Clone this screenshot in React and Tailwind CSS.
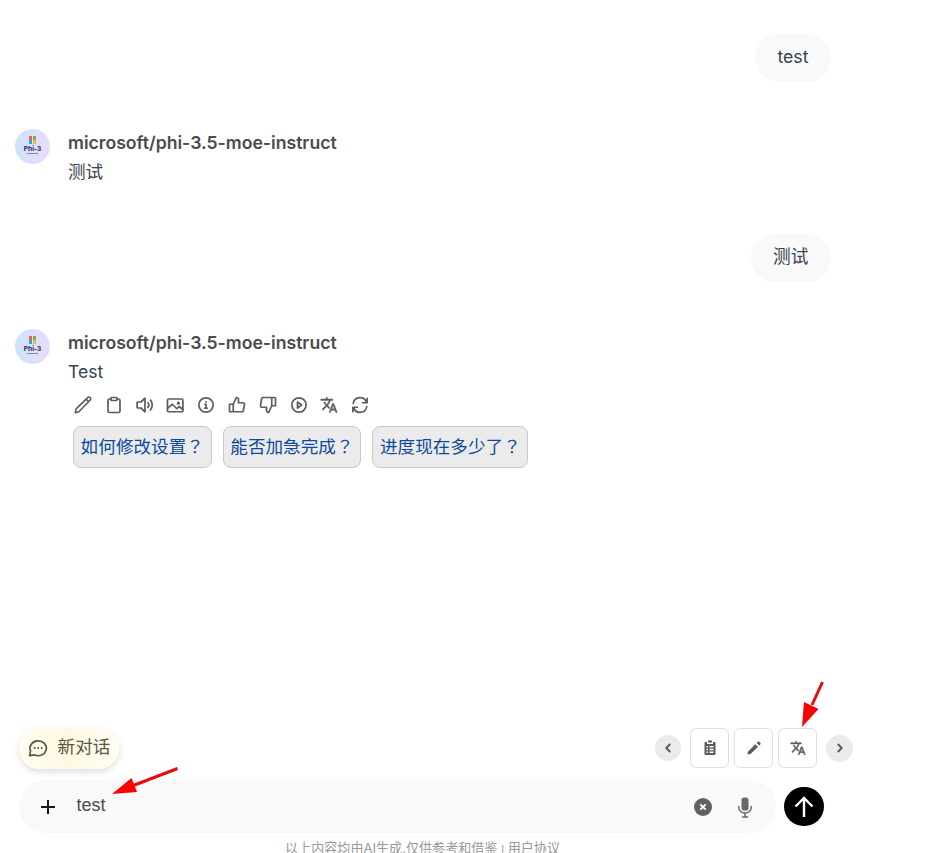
import React from "react";

const FONT = "font-['Inter','Noto_Sans_CJK_SC',sans-serif]";

function Icon({ size = 18, children, className = "", sw = 2.3 }) {
  return (
    <svg width={size} height={size} viewBox="0 0 24 24" fill="none" stroke="currentColor" strokeWidth={sw} strokeLinecap="round" strokeLinejoin="round" className={`shrink-0 ${className}`}>
      {children}
    </svg>
  );
}

function Translate({ size = 18 }) {
  return (
    <svg width={size} height={size} viewBox="0 0 24 24" fill="currentColor" stroke="currentColor" strokeWidth="0.6" className="shrink-0">
      <path d="m12.87 15.07-2.54-2.51.03-.03A17.52 17.52 0 0 0 14.07 6H17V4h-7V2H8v2H1v1.99h11.17C11.5 7.92 10.44 9.75 9 11.35 8.07 10.32 7.3 9.19 6.69 8h-2c.73 1.63 1.73 3.17 2.98 4.56l-5.09 5.02L4 19l5-5 3.11 3.11.76-2.04zM18.5 10h-2L12 22h2l1.12-3h4.75L21 22h2l-4.5-12zm-2.62 7 1.62-4.33L19.12 17h-3.24z" />
    </svg>
  );
}

function Avatar() {
  return (
    <div className="flex h-[35px] w-[35px] shrink-0 flex-col items-center rounded-full bg-linear-to-r from-[#cbe5fb] to-[#eadafb] pt-[7px]">
      <div className="grid grid-cols-2 gap-[0.5px]">
        <i className="h-[3.5px] w-[3.5px] bg-[#d9694f]" />
        <i className="h-[3.5px] w-[3.5px] bg-[#80ad43]" />
        <i className="h-[3.5px] w-[3.5px] bg-[#35a2dc]" />
        <i className="h-[3.5px] w-[3.5px] bg-[#eab74b]" />
      </div>
      <span className="mt-[1.5px] text-[6.6px] leading-[8px] font-bold text-[#29204f]">Phi-3</span>
      <i className="h-px w-[11px] bg-[#8b83a8]" />
    </div>
  );
}

function UserBubble({ children }) {
  return (
    <div className="flex justify-end pr-[121px]">
      <div className="h-12 rounded-full bg-[#f9f9f9] px-[22.5px] text-[17.7px] leading-[46px] text-[#374151]">{children}</div>
    </div>
  );
}

function BotMessage({ text, children }) {
  return (
    <div className="flex gap-[18px] pl-[15px]">
      <Avatar />
      <div>
        <h2 className="h-[28px] text-[17.65px] leading-[28px] font-semibold text-[#4b4b4b]">microsoft/phi-3.5-moe-instruct</h2>
        <p className="h-[30px] text-[17.6px] leading-[30px] text-[#374151]">{text}</p>
        {children}
      </div>
    </div>
  );
}

function MessageTools() {
  return (
    <div className="mt-[9px] flex gap-[12.8px] pl-[6px] text-[#5d5d5d]">
      <Icon sw={2.1}>
        <path d="M1.800 22.200l1-5L18.200 2.200a2.100 2.100 0 0 1 3.400 0 2.200 2.200 0 0 1 0 3.200L6.500 21zM16.500 4.500l3 3" />
      </Icon>
      <Icon>
        <path d="M8 4H6a2 2 0 0 0-2 2v14a2 2 0 0 0 2 2h12a2 2 0 0 0 2-2V6a2 2 0 0 0-2-2h-2" />
        <rect x="8" y="2" width="8" height="4" rx="1" />
      </Icon>
      <Icon>
        <path d="M12 3 6.500 8H2.500a1 1 0 0 0-1 1v6a1 1 0 0 0 1 1h4l5.500 5zM16 9a5 5 0 0 1 0 6M19.2 5.5a10 10 0 0 1 0 13" />
      </Icon>
      <Icon>
        <rect x="2" y="4" width="20.5" height="17" rx="1.5" />
        <path d="m2 16.500 6.500-5.500 6 6 3-3 5 4" />
        <circle cx="16.5" cy="9.5" r="1" />
      </Icon>
      <Icon>
        <circle cx="12" cy="12" r="9.5" />
        <path d="M10.5 11H12v5M10.5 16.2h3M12 7.6v.1" />
      </Icon>
      <Icon>
        <path d="M7 10v11M2 11h5l4-9a3 3 0 0 1 3 3v4h6a2 2 0 0 1 2 2.4l-1.5 8A2 2 0 0 1 18.5 21H3a1 1 0 0 1-1-1z" />
      </Icon>
      <Icon>
        <path d="M17 13V2M22 13h-5l-4 9a3 3 0 0 1-3-3v-4H4a2 2 0 0 1-2-2.4l1.5-8.6A2 2 0 0 1 5.5 2H21a1 1 0 0 1 1 1z" />
      </Icon>
      <Icon>
        <circle cx="12" cy="12" r="9.5" />
        <path d="m10 8 5.5 4-5.5 4z" />
      </Icon>
      <Translate />
      <Icon>
        <path d="M21.500 3v6h-6M20.500 8.500A9 9 0 0 0 3 10M2.500 21v-6h6M3.500 15.500A9 9 0 0 0 21 14" />
      </Icon>
    </div>
  );
}

function Chip({ children }) {
  return <button className="h-[42px] rounded-lg border border-[#c9c9c9] bg-[#ebebeb] px-[6.7px] pb-[3px] font-['Noto_Sans_CJK_TC',sans-serif] text-[17.6px] leading-[37px] whitespace-nowrap text-[#0b4a9e]">{children}</button>;
}

function Tool({ children }) {
  return <button className="flex h-10 w-[39px] items-center justify-center rounded-md border border-[#dfdfdf] bg-white">{children}</button>;
}

function Arrow({ className, w, h, line, head }) {
  return (
    <svg width={w} height={h} className={`absolute ${className}`}>
      <path d={line} stroke="#e60c0c" strokeWidth="3" fill="none" />
      <path d={head} fill="#ff0000" />
    </svg>
  );
}

export default function App() {
  return (
    <div className={`relative flex h-[853px] w-[952px] flex-col overflow-hidden bg-white ${FONT}`}>
      <main className="flex flex-1 flex-col pt-[34px]">
        <UserBubble>test</UserBubble>
        <div className="mt-[47px] h-[105px]">
          <BotMessage text="测试" />
        </div>
        <UserBubble>测试</UserBubble>
        <div className="mt-[47px]">
          <BotMessage text="Test">
            <MessageTools />
            <div className="mt-[12px] flex gap-[11.1px] pl-[5px]">
              <Chip>如何修改设置？</Chip>
              <Chip>能否加急完成？</Chip>
              <Chip>进度现在多少了？</Chip>
            </div>
          </BotMessage>
        </div>
      </main>

      <div className="flex h-[52px] shrink-0 items-start justify-between pr-[99px] pl-[19px]">
        <button className="flex h-[41px] w-[100px] items-center gap-[9px] rounded-full bg-linear-to-r from-[#fffdf0] via-[#fff9e3] to-[#fffdf0] pl-[9px] text-[17.6px] whitespace-nowrap text-[#5b563f] shadow-[0_3px_7px_rgba(0,0,0,0.13)]">
          <Icon size={20} sw={2} className="-mt-[2px]">
            <path d="M2 21.200 3 15.500A9.800 8.900 0 1 1 7.500 20.200z" />
            <path strokeWidth="2.400" d="M8 12h.01M12.200 12h.01M16.400 12h.01" />
          </Icon>
          <span className="relative -top-px left-[0.6px]">新对话</span>
        </button>
        <div className="flex items-center gap-[5px] text-[#5b5b5b]">
          <button className="mr-1 flex h-[26px] w-[26px] items-center justify-center rounded-full bg-[#ebebeb]">
            <Icon size={14} sw={3.3}><path d="m15 6-6 6 6 6" /></Icon>
          </button>
          <Tool>
            <svg width="16" height="16" viewBox="0 0 16 16" fill="currentColor">
              <path fillRule="evenodd" d="M3.500 2H5v2h6V2h1.500A1 1 0 0 1 13.500 3v11a1 1 0 0 1-1 1h-9a1 1 0 0 1-1-1V3a1 1 0 0 1 1-1zM4.500 6v1.500H6V6zm3 0v1.500h4V6zm-3 2.800v1.500H6V8.800zm3 0v1.500h4V8.800zm-3 2.800v1.500H6v-1.500zm3 0v1.500h4v-1.500z" />
              <rect x="6" y="0.500" width="4" height="2" rx=".5" />
            </svg>
          </Tool>
          <Tool>
            <svg width="16" height="16" viewBox="0 0 24 24" fill="currentColor">
              <path d="M2.500 18 14 6.200l4 4L6.500 21.500H2.500zM16 4.500l1.800-1.800a1.500 1.500 0 0 1 2.100 0l1.700 1.700a1.500 1.500 0 0 1 0 2.100l-1.800 1.800z" />
            </svg>
          </Tool>
          <Tool><Translate size={16} /></Tool>
          <button className="ml-1 flex h-[27px] w-[27px] items-center justify-center rounded-full bg-[#ebebeb]">
            <Icon size={14} sw={3.3}><path d="m9 6 6 6-6 6" /></Icon>
          </button>
        </div>
      </div>

      <div className="flex h-[53px] shrink-0 items-center gap-2 pl-[19px]">
        <div className="flex h-[53px] w-[757px] items-center rounded-full bg-[#f9f9f9] pl-[21px]">
          <svg width="16" height="16" viewBox="0 0 16 16" className="text-[#171717]">
            <path d="M8 1v14M1 8h14" stroke="currentColor" strokeWidth="2" />
          </svg>
          <span className="relative -top-px ml-[20.5px] flex-1 font-['Liberation_Sans',sans-serif] text-[18px] text-[#4b4b4b]">test</span>
          <svg width="18" height="18" viewBox="0 0 18 18" className="mr-[26px]">
            <circle cx="9" cy="9" r="9" fill="#616161" />
            <path d="m6.300 6.300 5.400 5.400m0-5.400-5.400 5.400" stroke="white" strokeWidth="1.800" />
          </svg>
          <svg width="14" height="21" viewBox="0 0 14 21" className="mt-px mr-[24px]" fill="none" stroke="#686868" strokeWidth="1.500" strokeLinecap="round">
            <rect x="3.500" y=".5" width="7" height="13" rx="2.600" fill="#686868" stroke="none" />
            <path d="M.8 9.500v.7c0 3.400 2.500 5.800 6.200 5.800s6.200-2.400 6.200-5.800v-.7M7 16v4M4.500 20h5" />
          </svg>
        </div>
        <button className="flex h-[39px] w-10 items-center justify-center rounded-full bg-black text-white">
          <svg width="20" height="22" viewBox="0 0 20 22" fill="none" stroke="currentColor" strokeWidth="2.400">
            <path d="M10 21V2M1.500 10.500 10 2l8.500 8.500" />
          </svg>
        </button>
      </div>
      <footer className="h-5 shrink-0 pt-[5px] pl-[285px] text-[13.08px] leading-[20px] whitespace-nowrap text-[#999]">以上内容均由AI生成,仅供参考和借鉴 <span className="font-['Liberation_Sans',sans-serif] text-[11px]">|</span> 用户协议</footer>

      <Arrow className="top-[681px] left-[801px]" w={24} h={46} line="M21.500 1 11 24" head="M1 46 3 21 17.500 28z" />
      <Arrow className="top-[766px] left-[112px]" w={67} h={30} line="M65.500 2.500 20 20" head="M0 28 19.500 12 25 26z" />
    </div>
  );
}
